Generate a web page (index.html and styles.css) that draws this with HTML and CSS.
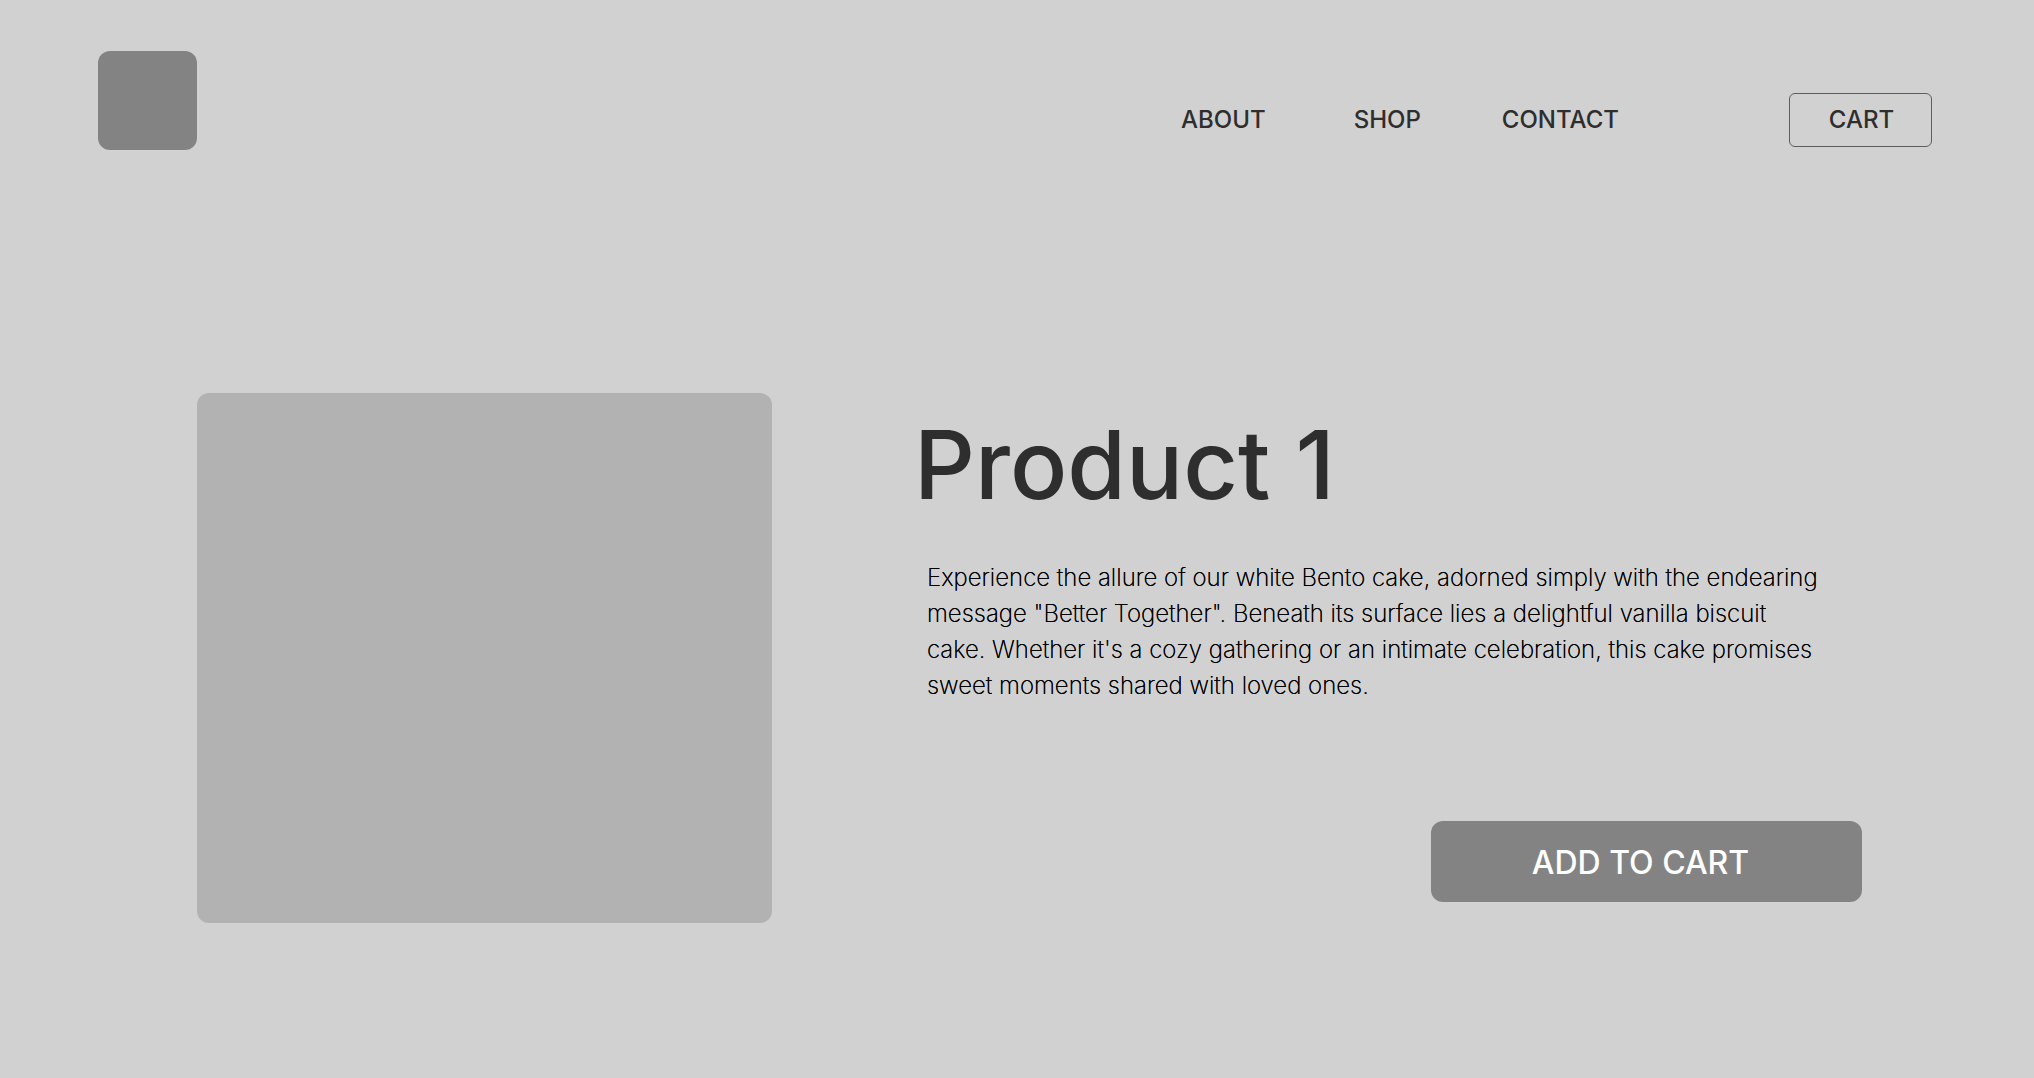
FILE: index.html
```html
<!DOCTYPE html>
<html lang="en">
<head>
<meta charset="utf-8">
<title>Product 1</title>
<link rel="stylesheet" href="styles.css">
</head>
<body>
<header class="header">
  <div class="logo"></div>
  <nav class="nav">
    <a class="link" href="#about">ABOUT</a>
    <a class="link link-shop" href="#shop">SHOP</a>
    <a class="link link-contact" href="#contact">CONTACT</a>
  </nav>
  <button class="cart" type="button">CART</button>
</header>
<main class="product">
  <div class="photo"></div>
  <section class="details">
    <h1 class="title">Product 1</h1>
    <p class="description">Experience the allure of our white Bento cake, adorned simply with the endearing message "Better Together". Beneath its surface lies a delightful vanilla biscuit cake. Whether it's a cozy gathering or an intimate celebration, this cake promises sweet moments shared with loved ones.</p>
    <button class="add" type="button">ADD TO CART</button>
  </section>
</main>
</body>
</html>
```
FILE: styles.css
```css
* { box-sizing: border-box; }
body {
  margin: 0;
  min-height: 100vh;
  background: #d1d1d1;
  color: #2e2e2e;
  font-family: Inter, "Liberation Sans", sans-serif;
}
.header {
  display: flex;
  align-items: flex-start;
  padding: 51px 102px 0 98px;
}
.logo {
  width: 99px;
  height: 99px;
  border-radius: 12px;
  background: #838383;
}
.nav {
  display: flex;
  margin: 54px 170px 0 auto;
}
.link {
  color: inherit;
  font-size: 24px;
  font-weight: 500;
  line-height: 30px;
  text-decoration: none;
}
.link-shop { margin-left: 88px; }
.link-contact { margin-left: 81px; }
.cart {
  width: 143px;
  height: 54px;
  margin-top: 42px;
  padding: 0 0 0 2px;
  border: 1px solid #5e5e5e;
  border-radius: 6px;
  background: none;
  color: inherit;
  font: 500 24px/30px Inter, "Liberation Sans", sans-serif;
}
.product {
  display: flex;
  gap: 142px;
  padding: 243px 172px 40px 197px;
}
.photo {
  flex: 0 0 575px;
  height: 530px;
  border-radius: 12px;
  background: #b2b2b2;
}
.details {
  display: flex;
  flex: 1;
  flex-direction: column;
}
.title {
  margin: 14px 0 0;
  font-size: 95px;
  font-weight: 500;
  line-height: 116px;
}
.description {
  margin: 37px 0 0;
  padding: 0 40px 0 13px;
  color: #000;
  font-size: 24px;
  font-weight: 200;
  line-height: 36px;
  text-shadow: 0 0 0 #000;
}
.add {
  align-self: flex-end;
  width: 431px;
  height: 81px;
  margin-top: 117px;
  padding: 2px 12px 0 0;
  border: 0;
  border-radius: 12px;
  background: #838383;
  color: #fff;
  font: 500 32px/40px Inter, "Liberation Sans", sans-serif;
}
```
